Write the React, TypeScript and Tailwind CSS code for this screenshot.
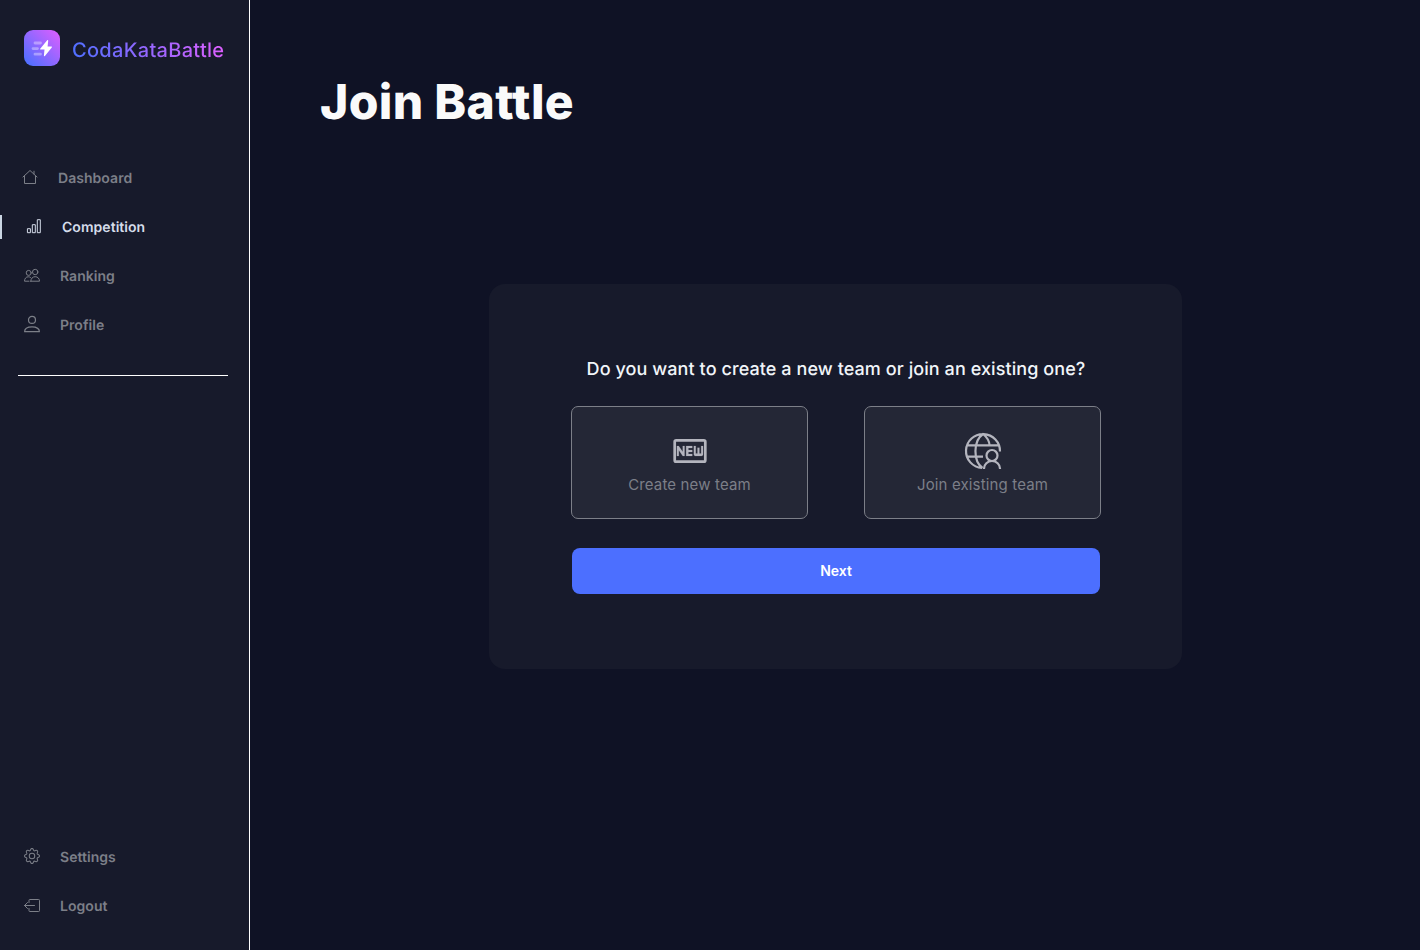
import type { ReactNode } from "react";
import { BsGear } from "react-icons/bs";

const stroke = {
  fill: "none",
  stroke: "currentColor",
  strokeLinecap: "round" as const,
  strokeLinejoin: "round" as const,
};

function Logo() {
  return (
    <svg width="36" height="36" viewBox="0 0 36 36">
      <defs>
        <linearGradient id="logo" x1="0" y1="1" x2="1" y2="0">
          <stop offset="0.05" stopColor="#4c6fff" />
          <stop offset="0.95" stopColor="#d95fff" />
        </linearGradient>
      </defs>
      <rect width="36" height="36" rx="9" fill="url(#logo)" />
      <path d="M11 13h5.500M9 18.600h4.500M11 24.200h5.500" stroke="#fff" strokeOpacity=".36" strokeWidth="2.800" strokeLinecap="round" />
      <path d="M23.200 10.300 16.200 18.800c-.3.400-.1.800.4.800h3.900l-.6 5.900c0 .7.600.9 1 .4l6.900-8.500c.3-.4.100-.8-.4-.8h-3.800l.6-5.900c0-.7-.6-.9-1-.4Z" fill="#fff" />
    </svg>
  );
}

function HomeIcon() {
  return (
    <svg width="16" height="16" viewBox="0 0 16 16" {...stroke}>
      <path d="M1 8 8 1.500 15 8M2.500 7v7.500h11V7M12 5V2.200" />
    </svg>
  );
}

function BarsIcon() {
  return (
    <svg width="16" height="16" viewBox="0 0 16 16" {...stroke}>
      <path d="M1.800 10.700h2.600v4H1.800zM6.700 6.700h2.600v8H6.700zM11.700 1.700h2.600v13h-2.600z" />
    </svg>
  );
}

function PeopleIcon() {
  return (
    <svg width="16" height="16" viewBox="0 0 16 16" {...stroke}>
      <circle cx="4.700" cy="5.900" r="2.500" />
      <circle cx="11.200" cy="5" r="2.700" />
      <path d="M5 14.200H.5c0-2.500 1.500-4.400 3.700-4.400 1 0 1.700.2 2.300.7M6.800 14.200h8.700c0-2.600-1.700-4.500-4.300-4.500s-4.400 1.900-4.400 4.500Z" />
    </svg>
  );
}

function ProfileIcon() {
  return (
    <svg width="16" height="18" viewBox="0 0 16 18" {...stroke} strokeWidth="1.200">
      <circle cx="8" cy="4.900" r="3.500" />
      <path d="M.6 16.700c0-3 3-4.900 7.400-4.900s7.400 1.900 7.400 4.900Z" />
    </svg>
  );
}

function LogoutIcon() {
  return (
    <svg width="16" height="16" viewBox="0 0 16 16" {...stroke}>
      <path d="M5 5.500V3.300q0-.8.8-.8h8.900q.8 0 .8.800v10.400q0 .8-.8.8H5.800q-.8 0-.8-.8v-2.200M10.500 8.500H.5M3.500 5.500l-3 3 3 3" />
    </svg>
  );
}

function NewIcon() {
  return (
    <svg width="40" height="40" viewBox="0 0 40 40" fill="currentColor">
      <rect x="4.700" y="9.300" width="30.600" height="21.400" rx="1.500" fill="none" stroke="currentColor" strokeWidth="2.700" />
      <path stroke="currentColor" strokeWidth=".1" transform="translate(1.500 0) scale(1.540 1.667)" d="M8.500 15H7.300l-2.550-3.500V15H3.500V9h1.200l2.600 3.500V9h1.200v6zm5-4.740H11v1.120h2.500v1.260H11v1.110h2.500V15h-4V9h4v1.260zm7 3.740c0 .55-.45 1-1 1h-4c-.55 0-1-.45-1-1V9h1.250v4.510h1.130V9.990h1.250v3.510h1.120V9h1.250v5z" />
    </svg>
  );
}

function GlobeUserIcon() {
  return (
    <svg width="40" height="40" viewBox="0 0 40 40" {...stroke} strokeWidth="2.200" strokeLinecap="butt">
      <path d="M37 20.500A17 17 0 1 0 19 37M19.500 37c-9.500-7-9.500-27 .5-34 4.500 3.500 6.500 7.500 6.700 12M4.500 14.300h31M4.500 25.700H20" />
      <circle cx="29" cy="24.500" r="5.500" />
      <path d="M21 38v-.5a8 7.500 0 0 1 16 0v.5" />
    </svg>
  );
}

function NavItem({ icon, label, offset, active = false }: { icon: ReactNode; label: string; offset: string; active?: boolean }) {
  return (
    <a className={`flex h-6 items-center gap-5 border-l-2 text-sm font-semibold ${offset} ${active ? "border-slate-300 text-[#d5dcea]" : "border-transparent text-[#7c7f88]"}`}>
      <span className="-mt-0.5">{icon}</span>
      <span className="pt-0.5 tracking-[0.04px]">{label}</span>
    </a>
  );
}

function Choice({ icon, label }: { icon: ReactNode; label: string }) {
  return (
    <button className="flex h-[113px] w-[237px] shrink-0 flex-col items-center rounded-[7px] border border-[#7c7f88] bg-[#242736] pt-6 text-[#b4b5be]">
      <span className="ml-px">{icon}</span>
      <span className="mt-[2px] text-[15px] leading-6 tracking-[0.15px] text-[#7c7f88]">{label}</span>
    </button>
  );
}

export default function App() {
  return (
    <div className="flex h-[950px] w-[1420px] bg-[#0f1225] font-['Inter',sans-serif] antialiased [text-rendering:geometricPrecision]">
      <aside className="flex w-[250px] shrink-0 flex-col border-r border-white bg-[#171a2b]">
        <div className="flex items-center gap-3 pt-[30px] pl-6">
          <Logo />
          <span className="mt-1 bg-[linear-gradient(75deg,#4c6fff_0%,#e05fff_100%)] bg-clip-text text-xl leading-6 font-medium tracking-[0.3px] text-transparent">CodaKataBattle</span>
        </div>
        <nav className="mt-[100px] flex flex-col gap-[25px]">
          <NavItem offset="pl-5" icon={<HomeIcon />} label="Dashboard" />
          <NavItem offset="pl-6" icon={<BarsIcon />} label="Competition" active />
          <NavItem offset="pl-[22px]" icon={<PeopleIcon />} label="Ranking" />
          <NavItem offset="pl-[22px]" icon={<ProfileIcon />} label="Profile" />
        </nav>
        <div className="mt-[38px] ml-[18px] h-px w-[210px] bg-white" />
        <nav className="mt-auto mb-8 flex flex-col gap-[25px]">
          <NavItem offset="pl-[22px]" icon={<BsGear size={16} />} label="Settings" />
          <NavItem offset="pl-[22px]" icon={<LogoutIcon />} label="Logout" />
        </nav>
      </aside>
      <main className="flex flex-1 flex-col">
        <h1 className="mt-[72px] ml-[70px] text-5xl leading-[60px] font-extrabold tracking-[0.35px] text-[#fafafa]">Join Battle</h1>
        <section className="mt-[152px] ml-[239px] flex h-[385px] w-[693px] flex-col rounded-2xl bg-[#171a2b] pt-[73px] pr-[81px] pl-[82px]">
          <h2 className="text-center text-lg leading-[26px] font-medium tracking-[0.08px] whitespace-nowrap text-slate-100">Do you want to create a new team or join an existing one?</h2>
          <div className="mt-[23px] flex gap-14">
            <Choice icon={<NewIcon />} label="Create new team" />
            <Choice icon={<GlobeUserIcon />} label="Join existing team" />
          </div>
          <button className="mt-[29px] ml-px h-[46px] w-[528px] rounded-lg bg-[#4c6fff] text-sm font-semibold text-white">Next</button>
        </section>
      </main>
    </div>
  );
}
